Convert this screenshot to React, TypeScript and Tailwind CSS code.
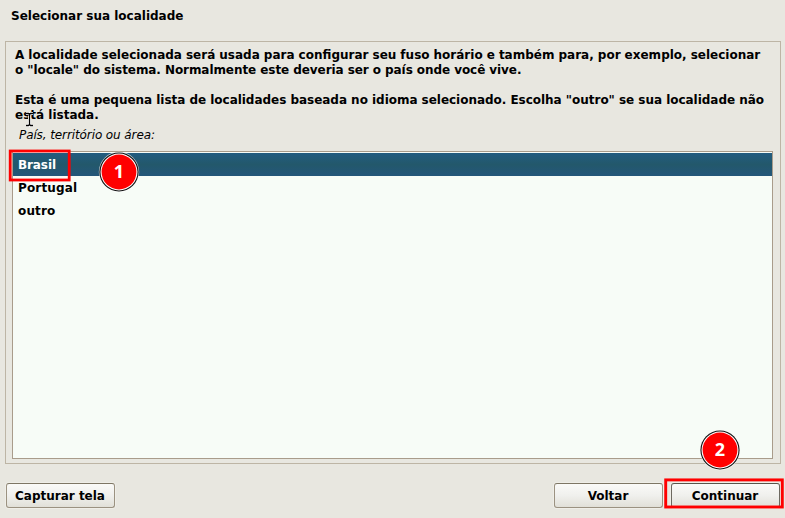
import type { ReactNode } from "react";

const description = [
  { text: "A localidade selecionada será usada para configurar seu fuso horário e também para, por exemplo, selecionar", tracking: "[word-spacing:-0.13px]" },
  { text: 'o "locale" do sistema. Normalmente este deveria ser o país onde você vive.', tracking: "tracking-[-0.07px]" },
  { text: "", tracking: "" },
  { text: 'Esta é uma pequena lista de localidades baseada no idioma selecionado. Escolha "outro" se sua localidade não', tracking: "tracking-[-0.03px]" },
  { text: "está listada.", tracking: "" },
];

const places = [
  { name: "Brasil", style: "bg-linear-to-b from-[#225c80] via-[#23586b] to-[#24567a] text-white tracking-[-0.1px]" },
  { name: "Portugal", style: "tracking-[0.15px]" },
  { name: "outro", style: "tracking-[0.15px]" },
];

function Button({ children, focused = false }: { children: ReactNode; focused?: boolean }) {
  return (
    <button
      className={`flex h-[25px] w-[109px] items-center justify-center rounded-[3px] border bg-linear-to-b from-[#fafaf8] via-[#f0f0ed] to-[#e1e0d8] pt-px pr-px font-bold whitespace-nowrap shadow-[0_0_0_1px_#efeee8] ${focused ? "border-[#6d6960] border-t-[#57544a]" : "border-[#9b9281] border-t-[#7d7664]"}`}
    >
      {children}
    </button>
  );
}

function Marker({ label, className }: { label: string; className: string }) {
  return (
    <svg viewBox="0 0 42 42" className={`absolute size-[42px] ${className}`}>
      <circle cx="21" cy="21" r="20.2" fill="#fff" fillOpacity="0.7" />
      <circle cx="21" cy="21" r="19.6" fill="#111" />
      <circle cx="21" cy="21" r="18.5" fill="#fff" />
      <circle cx="21" cy="21" r="17.4" fill="red" />
      <text x="21" y="27" textAnchor="middle" fill="#fff" fontSize="18" fontWeight="700" fontFamily="'Open Sans', sans-serif">
        {label}
      </text>
    </svg>
  );
}

export default function App() {
  return (
    <main className="relative flex h-[518px] w-[785px] flex-col overflow-hidden bg-[#e8e7e0] font-['DejaVu_Sans',sans-serif] text-[12px] leading-[15px] text-black">
      <h1 className="h-[41px] pt-[9px] pl-[11px] font-bold">Selecionar sua localidade</h1>
      <section className="mr-1 ml-[5px] flex h-[423px] flex-col border border-[#bdb5a5] px-[6px] pt-[6px]">
        <div className="h-[75px] pl-[3px] font-bold whitespace-nowrap">
          {description.map((line, i) => (
            <p key={i} className={`h-[15px] ${line.tracking}`}>{line.text}</p>
          ))}
        </div>
        <p className="mt-[5px] h-[23px] pl-[7px] tracking-[-0.1px] italic">País, território ou área:</p>
        <ul className="h-[308px] w-[761px] border border-[#a99c8b] bg-[#f7fcf7] pt-px font-bold">
          {places.map((place) => (
            <li key={place.name} className={`flex h-[23px] items-center pt-[2px] pl-[5px] ${place.style}`}>
              {place.name}
            </li>
          ))}
        </ul>
      </section>
      <footer className="mt-[19px] flex pr-[5px] pl-[6px]">
        <Button>Capturar tela</Button>
        <div className="ml-auto flex gap-2">
          <Button>Voltar</Button>
          <Button focused>Continuar</Button>
        </div>
      </footer>
      <svg viewBox="0 0 785 518" className="pointer-events-none absolute inset-0 h-[518px] w-[785px]" fill="none" stroke="#ff0000">
        <rect x="10.2" y="151" width="59" height="29" strokeWidth="2.8" />
        <rect x="665.7" y="479.9" width="116.6" height="27.1" strokeWidth="2.9" />
      </svg>
      <Marker label="1" className="top-[151px] left-[98px]" />
      <Marker label="2" className="top-[429px] left-[699px]" />
      <svg viewBox="0 0 9 15" className="absolute top-[112px] left-[25px] h-[15px] w-[9px] overflow-visible" fill="none">
        <path d="M1 1.5h2.5l1 1 1-1H8M4.5 2.5v10M1 13.5h2.5l1-1 1 1H8" stroke="#fff" strokeWidth="3" />
        <path d="M1 1.5h2.5l1 1 1-1H8M4.5 2.5v10M1 13.5h2.5l1-1 1 1H8" stroke="#000" strokeWidth="1.3" />
      </svg>
    </main>
  );
}
